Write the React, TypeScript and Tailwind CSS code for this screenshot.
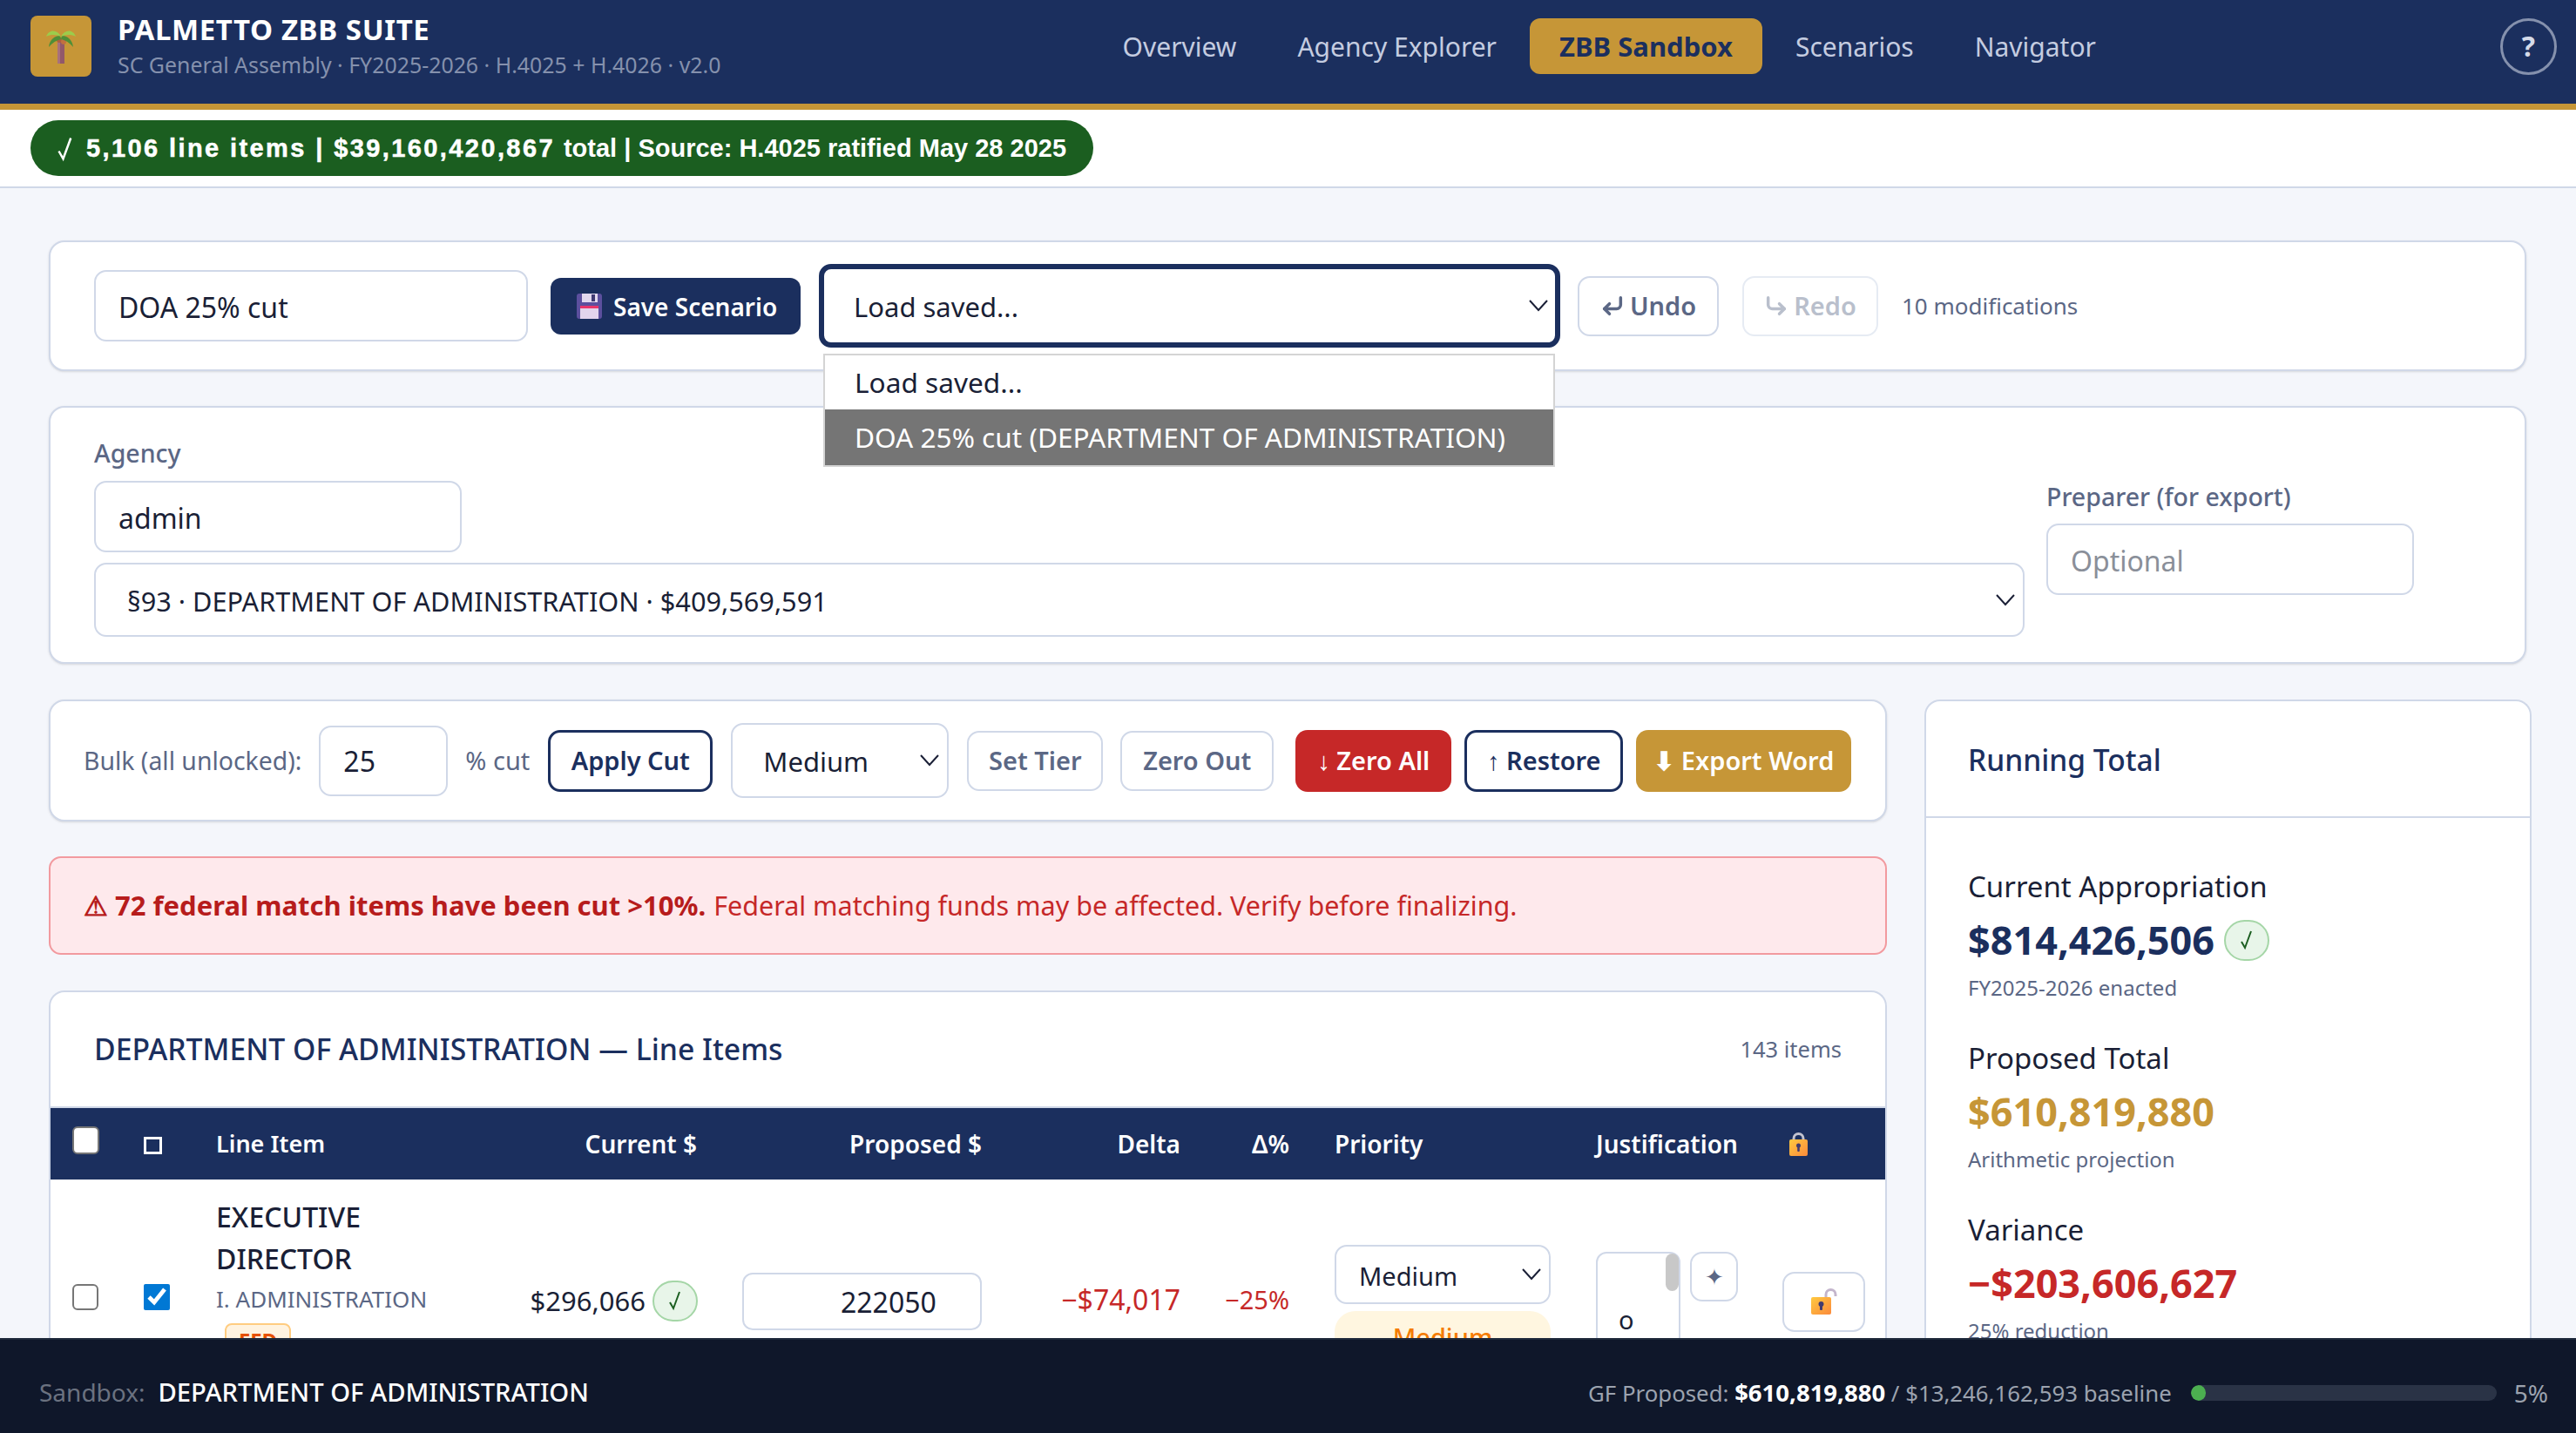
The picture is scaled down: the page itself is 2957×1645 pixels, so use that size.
import { useState } from "react";
import { CornerDownLeft, CornerDownRight } from "lucide-react";

const tabs = ["Overview", "Agency Explorer", "ZBB Sandbox", "Scenarios", "Navigator"];

function Palm() {
  return (
    <svg width="34" height="40" viewBox="0 0 34 40">
      <rect x="13" y="14" width="8" height="26" fill="#92586a" />
      <rect x="13" y="14" width="3" height="26" fill="#a8707c" />
      <circle cx="15" cy="13" r="3" fill="#b0603c" />
      <circle cx="20" cy="15" r="3" fill="#c2703f" />
      <path d="M16 8C10 8 4 12 3 21C7 16 12 13 17 12Z" fill="#4f8f37" />
      <path d="M18 8C24 8 30 12 31 21C27 16 22 13 17 12Z" fill="#4f8f37" />
      <path d="M17 9C12 0 3 1 0 9C6 6 12 7 17 9Z" fill="#9ccc4b" />
      <path d="M17 9C22 0 31 1 34 9C28 6 22 7 17 9Z" fill="#9ccc4b" />
    </svg>
  );
}

function Floppy() {
  return (
    <svg width="29" height="29" viewBox="0 0 29 29">
      <rect width="29" height="29" rx="3" fill="#5c4f9e" />
      <rect x="6" y="0" width="18" height="10" fill="#e2d8ee" />
      <rect x="17" y="1" width="4" height="8" fill="#3f3a72" />
      <rect x="4" y="14" width="21" height="15" fill="#e2d4ec" />
      <rect x="4" y="14" width="21" height="3" fill="#e8356b" />
    </svg>
  );
}

function LockGradient({ id }: { id: string }) {
  return (
    <defs>
      <linearGradient id={id} x1="0" y1="0" x2="1" y2="1">
        <stop offset="0" stopColor="#ffc93f" />
        <stop offset="1" stopColor="#fb8a3c" />
      </linearGradient>
    </defs>
  );
}

function ClosedLock() {
  return (
    <svg width="21" height="27" viewBox="0 0 21 27" className="block">
      <LockGradient id="lock-head" />
      <path d="M5 9V7a5.5 5.5 0 0 1 11 0v2" fill="none" stroke="#c3c3cf" strokeWidth="3" />
      <rect y="8" width="21" height="19" rx="2" fill="url(#lock-head)" />
      <circle cx="10.5" cy="15" r="2.5" fill="#423b6e" />
      <rect x="9.2" y="15" width="2.6" height="7" rx="1" fill="#423b6e" />
    </svg>
  );
}

function OpenLock() {
  return (
    <svg width="30" height="30" viewBox="0 0 30 30">
      <LockGradient id="lock-row" />
      <path d="M17 11V7a5.5 5.5 0 0 1 11 0v2" fill="none" stroke="#c3b5cc" strokeWidth="3" />
      <rect y="10" width="23" height="20" rx="2" fill="url(#lock-row)" />
      <circle cx="11.5" cy="18" r="3" fill="#423b6e" />
      <rect x="10" y="18" width="3" height="7" rx="1" fill="#423b6e" />
    </svg>
  );
}

function Tick({ className }: { className: string }) {
  return (
    <svg viewBox="0 0 16 24" className={className}>
      <path d="M2 14L6 21L13 2" fill="none" stroke="currentColor" strokeWidth="2" />
    </svg>
  );
}

function CheckBadge() {
  return (
    <span className="flex items-center justify-center w-[52px] h-[47px] shrink-0 rounded-full bg-[#e8f5e9] border-2 border-[#a5d6a7] text-[#1b5e20]">
      <Tick className="w-[16px] h-[24px]" />
    </span>
  );
}

function Chevron() {
  return (
    <svg width="22" height="14" viewBox="0 0 22 14" className="shrink-0 text-[#1a1f36]">
      <path d="M1 1L11 12L21 1" fill="none" stroke="currentColor" strokeWidth="2" />
    </svg>
  );
}

function SelectBox({ label, className }: { label: string; className: string }) {
  return (
    <div className={`flex items-center justify-between bg-white whitespace-nowrap ${className}`}>
      <span className="pt-[3px]">{label}</span>
      <Chevron />
    </div>
  );
}

function Stat({ label, value, note, color, badge }: { label: string; value: string; note: string; color: string; badge?: boolean }) {
  return (
    <div className="mb-[41px]">
      <div className="text-[33px] leading-[46px] text-[#1a1f36]">{label}</div>
      <div className={`flex items-center gap-[11px] mt-[7px] h-[62px] text-[45px] font-bold ${color}`}>
        {value}
        {badge && <CheckBadge />}
      </div>
      <div className="text-[24px] leading-[34px] mt-[7px] text-[#5b6785]">{note}</div>
    </div>
  );
}

export default function App() {
  const [checked, setChecked] = useState(true);

  return (
    <div className="h-screen overflow-hidden bg-[#f4f6fb] text-[#1a1f36] font-['Noto_Sans',sans-serif]">
      <header className="flex items-center h-[126px] pb-[13px] pl-[35px] pr-[22px] border-b-[7px] border-[#c69637] bg-[#1b2f5e]">
        <div className="flex items-center justify-center w-[70px] h-[70px] rounded-[8px] bg-[#c69637]"><Palm /></div>
        <div className="ml-[30px]">
          <div className="-mt-[2px] text-[33px] leading-[40px] font-bold tracking-[0.6px] text-white">PALMETTO ZBB SUITE</div>
          <div className="text-[24.9px] leading-[34px] mt-[3px] text-[#8591ad]">SC General Assembly · FY2025-2026 · H.4025 + H.4026 · v2.0</div>
        </div>
        <nav className="flex items-center gap-[6px] ml-auto">
          {tabs.map((t) =>
            t === "ZBB Sandbox" ? (
              <a key={t} className="px-[34px] h-[64px] flex items-center rounded-[12px] bg-[#c69637] text-[#1b2f5e] text-[31px] font-bold">{t}</a>
            ) : (
              <a key={t} className="px-[32px] h-[64px] flex items-center text-[30px] text-[#c4cce0]">{t}</a>
            )
          )}
        </nav>
        <div className="flex items-center justify-center w-[65px] h-[65px] ml-[432px] rounded-full border-[3px] border-[#8591ad] text-[#d5dbe9] text-[32px] font-bold">?</div>
      </header>

      <div className="h-[90px] flex items-center pl-[35px] bg-white border-b-[2px] border-[#d0d8e8]">
        <div className="flex items-center h-[64px] pt-[2px] pl-[30px] pr-[31px] rounded-full bg-[#1b5e20] text-white text-[29px] whitespace-nowrap font-['Liberation_Sans',sans-serif]">
          <Tick className="w-[20px] h-[30px] mr-[14px]" />
          <b className="tracking-[2.4px] [-webkit-text-stroke:0.5px_white]">5,106 line items | $39,160,420,867</b>
          <span className="font-bold ml-[10px]">total | Source: H.4025 ratified May 28 2025</span>
        </div>
      </div>

      <main className="pt-[60px] pl-[56px] pr-[57px]">
        <section className="flex items-center h-[150px] px-[50px] bg-white rounded-[18px] border-2 border-[#d0d8e8] shadow-sm">
          <div className="flex items-center w-[498px] h-[82px] pt-[3px] px-[26px] rounded-[14px] border-2 border-[#d0d8e8] text-[32px]">DOA 25% cut</div>
          <button className="flex items-center gap-[13px] ml-[26px] w-[287px] h-[65px] pl-[30px] rounded-[12px] bg-[#1b2f5e] text-white text-[28px] font-semibold whitespace-nowrap">
            <Floppy /><span className="pt-[2px]">Save Scenario</span>
          </button>
          <div className="relative ml-[21px]">
            <SelectBox
              label="Load saved..."
              className="w-[851px] h-[96px] pl-[34px] pr-[8px] rounded-[14px] border-[6px] border-[#1b2f5e] text-[31px]"
            />
            <div className="absolute left-[5px] top-[103px] w-[840px] z-10 bg-white border-2 border-[#d4d4d4] text-[31.6px] whitespace-nowrap">
              <div className="h-[62px] flex items-center px-[34px]">Load saved...</div>
              <div className="h-[64px] flex items-center px-[34px] bg-[#757575] text-white">DOA 25% cut (DEPARTMENT OF ADMINISTRATION)</div>
            </div>
          </div>
          <button className="flex items-center justify-center gap-[6px] ml-[20px] w-[162px] h-[69px] rounded-[14px] border-2 border-[#d0d8e8] text-[29px] font-semibold text-[#5b6785]">
            <CornerDownLeft className="w-[28px] h-[28px]" strokeWidth={3} />Undo
          </button>
          <button className="flex items-center justify-center gap-[6px] ml-[27px] w-[156px] h-[69px] rounded-[14px] border-2 border-[#e6ebf3] text-[29px] font-semibold text-[#b9bfcc]">
            <CornerDownRight className="w-[28px] h-[28px]" strokeWidth={3} />Redo
          </button>
          <span className="ml-[27px] text-[26px] text-[#5b6785] whitespace-nowrap">10 modifications</span>
        </section>

        <section className="flex items-start h-[296px] mt-[40px] pt-[32px] px-[50px] bg-white rounded-[18px] border-2 border-[#d0d8e8] shadow-sm">
          <div className="w-[2216px]">
            <div className="text-[28.5px] leading-[40px] font-medium text-[#5b6785]">Agency</div>
            <div className="flex items-center mt-[12px] w-[422px] h-[82px] pt-[4px] px-[26px] rounded-[14px] border-2 border-[#d0d8e8] text-[32px]">admin</div>
            <SelectBox
              label="§93 · DEPARTMENT OF ADMINISTRATION · $409,569,591"
              className="mt-[12px] h-[85px] pl-[36px] pr-[9px] rounded-[14px] border-2 border-[#d0d8e8] text-[30.7px]"
            />
          </div>
          <div className="mt-[50px] ml-[25px] w-[422px]">
            <div className="text-[28.5px] leading-[40px] font-medium text-[#5b6785] whitespace-nowrap">Preparer (for export)</div>
            <div className="flex items-center mt-[11px] h-[82px] pt-[4px] px-[26px] rounded-[14px] border-2 border-[#d0d8e8] text-[32px] text-[#8a8f99]">Optional</div>
          </div>
        </section>

        <div className="grid grid-cols-[2110px_697px] gap-[43px] mt-[41px]">
          <div>
            <section className="flex items-center h-[140px] pl-[38px] bg-white rounded-[18px] border-2 border-[#d0d8e8] shadow-sm whitespace-nowrap">
              <span className="text-[28.4px] text-[#5b6785]">Bulk (all unlocked):</span>
              <div className="flex items-center ml-[20px] w-[148px] h-[81px] pt-[2px] px-[26px] rounded-[14px] border-2 border-[#d0d8e8] text-[32px]">25</div>
              <span className="ml-[20px] text-[29px] text-[#5b6785]">% cut</span>
              <button className="ml-[21px] w-[189px] h-[71px] rounded-[14px] border-[3px] border-[#1b2f5e] text-[29px] font-semibold text-[#1b2f5e]">Apply Cut</button>
              <SelectBox label="Medium" className="ml-[21px] w-[250px] h-[86px] pl-[35px] pr-[9px] rounded-[14px] border-2 border-[#d0d8e8] text-[31px]" />
              <button className="ml-[21px] w-[156px] h-[69px] rounded-[14px] border-2 border-[#d0d8e8] text-[29px] font-semibold text-[#5b6785]">Set Tier</button>
              <button className="ml-[20px] w-[176px] h-[69px] rounded-[14px] border-2 border-[#d0d8e8] text-[29px] font-semibold text-[#5b6785]">Zero Out</button>
              <button className="ml-[25px] w-[179px] h-[71px] rounded-[14px] bg-[#c62828] text-[29px] font-semibold text-white">↓ Zero All</button>
              <button className="ml-[15px] w-[182px] h-[71px] rounded-[14px] border-[3px] border-[#1b2f5e] text-[29px] font-semibold text-[#1b2f5e]">↑ Restore</button>
              <button className="ml-[15px] w-[247px] h-[71px] rounded-[14px] bg-[#c69637] text-[29px] font-semibold text-white">⬇ Export Word</button>
            </section>

            <div className="flex items-center mt-[40px] h-[113px] px-[38px] rounded-[14px] bg-[#fee9ec] border-2 border-[#f29a9f] text-[#c62828] whitespace-nowrap">
              <b className="text-[31px] text-[#b71c1c]">⚠ 72 federal match items have been cut &gt;10%.</b>
              <span className="ml-[9px] text-[30.5px]">Federal matching funds may be affected. Verify before finalizing.</span>
            </div>

            <section className="mt-[41px] bg-white rounded-t-[18px] border-x-2 border-t-2 border-[#d0d8e8]">
              <div className="flex items-center justify-between h-[131px] px-[50px]">
                <span className="text-[33.7px] font-medium text-[#1b2f5e]">DEPARTMENT OF ADMINISTRATION — Line Items</span>
                <span className="text-[25.5px] text-[#5b6785]">143 items</span>
              </div>
              <table className="w-full table-fixed border-collapse border-t-2 border-[#d0d8e8]">
                <colgroup>
                  <col className="w-[81px]" />
                  <col className="w-[83px]" />
                  <col className="w-[363px]" />
                  <col className="w-[241px]" />
                  <col className="w-[327px]" />
                  <col className="w-[228px]" />
                  <col className="w-[125px]" />
                  <col className="w-[300px]" />
                  <col className="w-[216px]" />
                  <col />
                </colgroup>
                <thead className="bg-[#1b2f5e]">
                  <tr className="h-[83px] text-[28px] text-white whitespace-nowrap">
                    <th className="pl-[25px] font-semibold"><span className="block w-[31px] h-[32px] -mt-[8px] rounded-[6px] bg-white border-2 border-[#767676]" /></th>
                    <th className="pl-[26px] text-left font-semibold"><span className="block w-[21px] h-[20px] mt-[4px] border-[3px] border-white" /></th>
                    <th className="pl-[26px] text-left text-[27px] font-semibold">Line Item</th>
                    <th className="pr-[26px] text-right font-semibold">Current $</th>
                    <th className="pr-[26px] text-right font-semibold">Proposed $</th>
                    <th className="pr-[26px] text-right font-semibold">Delta</th>
                    <th className="pr-[26px] text-right font-semibold">Δ%</th>
                    <th className="pl-[26px] text-left font-semibold">Priority</th>
                    <th className="pl-[26px] text-left font-semibold">Justification</th>
                    <th className="pl-[32px] text-left font-semibold"><ClosedLock /></th>
                  </tr>
                </thead>
                <tbody>
                  <tr className="h-[276px] text-[31px]">
                    <td className="pl-[25px]"><span className="block w-[30px] h-[30px] -mt-[6px] rounded-[6px] bg-white border-2 border-[#767676]" /></td>
                    <td className="pl-[26px]">
                      <input type="checkbox" checked={checked} onChange={(e) => setChecked(e.target.checked)} className="block w-[30px] h-[30px] -mt-[6px] accent-[#0078d4]" />
                    </td>
                    <td className="pl-[26px] pt-[19px] pb-[26px] align-top">
                      <div className="w-[240px] text-[32px] leading-[48px] font-medium">EXECUTIVE DIRECTOR</div>
                      <div className="text-[26px] leading-[44px] text-[#5b6785] whitespace-nowrap">I. ADMINISTRATION</div>
                      <span className="inline-block mt-[3px] ml-[10px] px-[14px] rounded-[8px] bg-[#fff3e0] border-2 border-[#ffcc80] text-[24px] font-bold text-[#e65100]">FED</span>
                    </td>
                    <td className="pr-[25px]">
                      <div className="flex items-center justify-end gap-[8px] mt-[2px]">$296,066<CheckBadge /></div>
                    </td>
                    <td className="pl-[26px] pr-[26px]">
                      <div className="flex items-center mt-[3px] h-[66px] pl-[111px] pt-[2px] rounded-[12px] border-2 border-[#d0d8e8] text-[32px]">222050</div>
                    </td>
                    <td className="pr-[26px] text-right text-[#c62828] text-[32px]">−$74,017</td>
                    <td className="pr-[26px] text-right text-[#c62828] text-[29px]">−25%</td>
                    <td className="pl-[26px] pr-[26px] align-top pt-[75px]">
                      <SelectBox label="Medium" className="h-[68px] pl-[26px] pr-[9px] rounded-[14px] border-2 border-[#d0d8e8] text-[29px]" />
                      <div className="flex items-start justify-center mt-[8px] h-[60px] pt-[8px] rounded-[24px] bg-[#fff6e0] text-[29px] font-medium text-[#f57c00]">Medium</div>
                    </td>
                    <td className="pl-[26px] align-top pt-[83px]">
                      <div className="flex gap-[11px]">
                        <div className="relative w-[97px] h-[150px] rounded-[12px] border-2 border-[#d0d8e8] pl-[24px] pt-[56px] text-[29px] leading-[40px]">
                          o
                          <span className="absolute right-0 top-0 w-[15px] h-[43px] rounded-full bg-[#c8c8c8]" />
                        </div>
                        <button className="flex items-center justify-center w-[55px] h-[57px] rounded-[14px] border-2 border-[#d0d8e8] text-[26px] text-[#5b6785]">✦</button>
                      </div>
                    </td>
                    <td className="pl-[24px]">
                      <button className="flex items-center justify-center w-[95px] h-[69px] mt-[4px] rounded-[14px] border-2 border-[#d0d8e8]">
                        <OpenLock />
                      </button>
                    </td>
                  </tr>
                </tbody>
              </table>
            </section>
          </div>

          <aside className="bg-white rounded-t-[18px] border-x-2 border-t-2 border-[#d0d8e8]">
            <div className="flex items-center h-[134px] pt-[2px] px-[48px] border-b-2 border-[#d0d8e8] text-[33.5px] font-medium text-[#1b2f5e]">Running Total</div>
            <div className="pt-[56px] px-[48px]">
              <Stat label="Current Appropriation" value="$814,426,506" note="FY2025-2026 enacted" color="text-[#1b2f5e]" badge />
              <Stat label="Proposed Total" value="$610,819,880" note="Arithmetic projection" color="text-[#c69637]" />
              <Stat label="Variance" value="−$203,606,627" note="25% reduction" color="text-[#c62828]" />
            </div>
          </aside>
        </div>
      </main>

      <footer className="fixed inset-x-0 bottom-0 flex items-center justify-between h-[109px] pt-[14px] pl-[45px] pr-[32px] bg-[#0f172a] border-t-2 border-[#1e293b] whitespace-nowrap">
        <div className="flex items-baseline">
          <span className="text-[28px] text-[#6b7280]">Sandbox:</span>
          <span className="ml-[15px] text-[29.2px] font-medium text-white">DEPARTMENT OF ADMINISTRATION</span>
        </div>
        <div className="flex items-center text-[25.8px] text-[#9ca3af]">
          <span>GF Proposed: <b className="text-[27.5px] font-bold text-white">$610,819,880</b> / $13,246,162,593 baseline</span>
          <div className="ml-[22px] w-[351px] h-[18px] rounded-full bg-[#2a3346] overflow-hidden">
            <div className="w-[5%] h-full rounded-full bg-[#4caf50]" />
          </div>
          <span className="ml-[20px] text-[28px]">5%</span>
        </div>
      </footer>
    </div>
  );
}
